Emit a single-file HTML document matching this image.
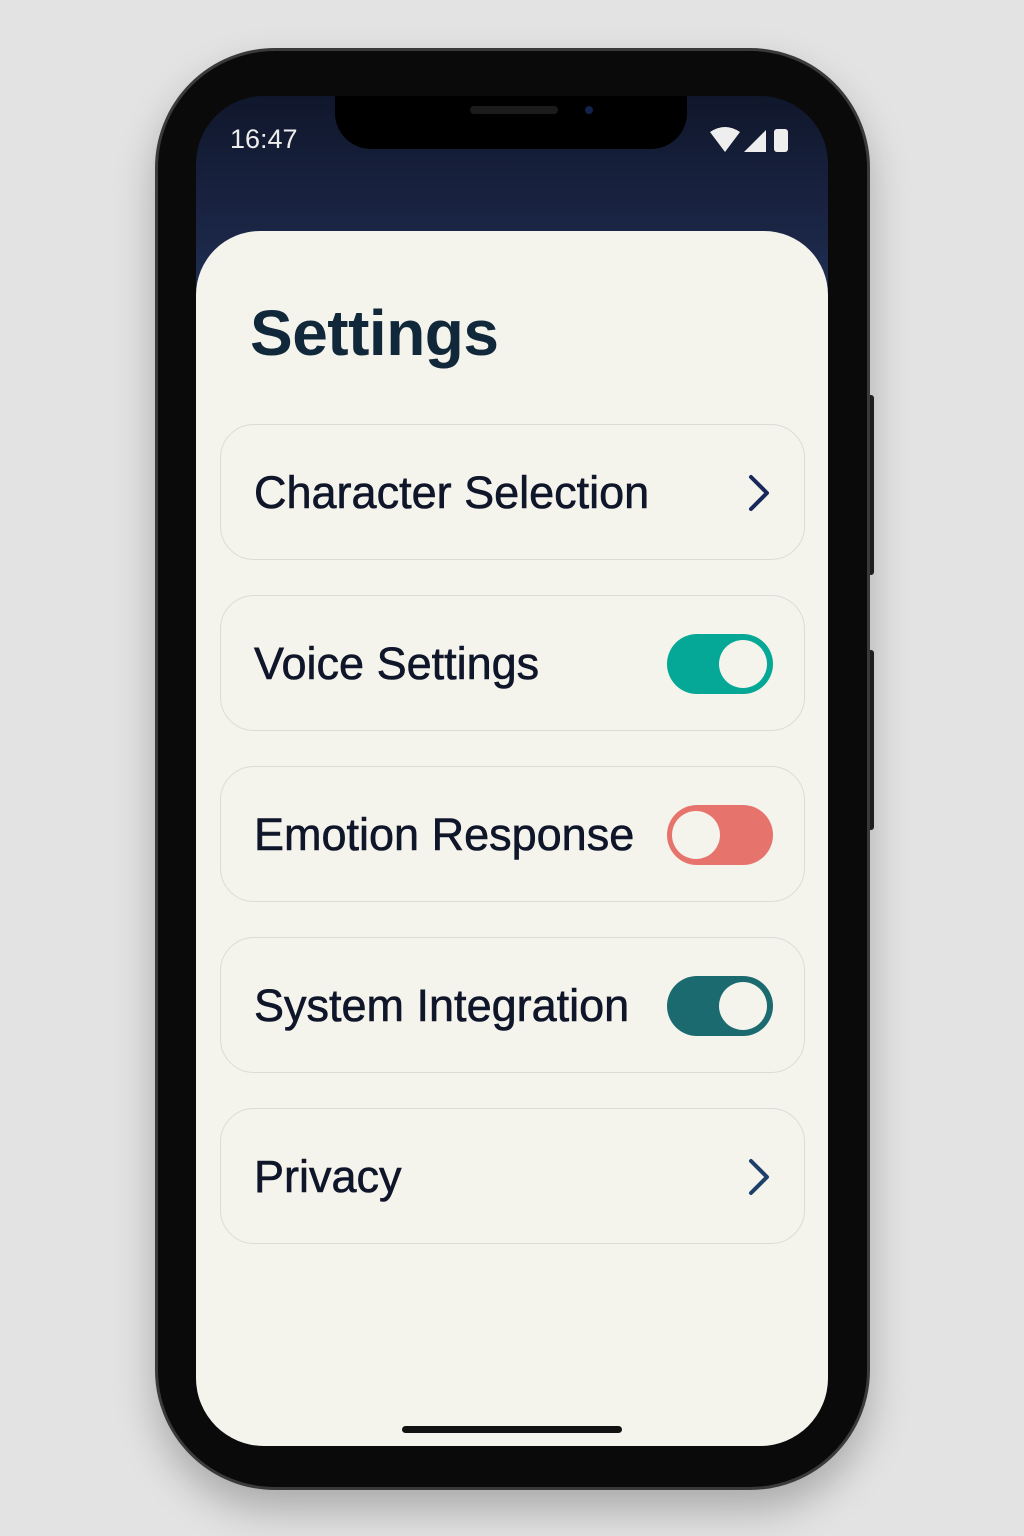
<!DOCTYPE html><html><head><style>
body{margin:0;width:1024px;height:1536px;background:#e3e3e3;position:relative;overflow:hidden;font-family:"Liberation Sans",sans-serif}
.btn{position:absolute;left:866px;width:8px;background:#222;border-radius:3px}
.phone{position:absolute;left:155px;top:48px;width:715px;height:1442px;border-radius:120px;background:#0a0a0a;border:3px solid #3a3a3a;box-sizing:border-box;box-shadow:0 20px 40px rgba(0,0,0,.25)}
.screen{position:absolute;left:196px;top:96px;width:632px;height:1350px;border-radius:68px;overflow:hidden;background:linear-gradient(#10172c,#1b2646 140px,#2a4068 300px)}
.notch{position:absolute;left:139px;top:0;width:352px;height:53px;background:#000;border-radius:0 0 36px 36px}
.sheet{position:absolute;left:0;top:135px;width:632px;height:1300px;background:#f4f3ec;border-radius:64px 64px 0 0}
.title{position:absolute;left:54px;top:65px;font-size:64px;font-weight:bold;color:#10283a;letter-spacing:-.5px}
.card{position:absolute;left:24px;width:585px;height:136px;border:1.5px solid #dcdbd4;border-radius:34px;box-sizing:border-box}
.card span{position:absolute;left:33px;top:42px;font-size:45px;color:#10162a;letter-spacing:0;-webkit-text-stroke:.6px #10162a}
.tg{position:absolute;left:446px;top:38px;width:106px;height:60px;border-radius:30px}
.kn{position:absolute;top:6px;width:48px;height:48px;border-radius:50%;background:#f4f3ec}
.chev{position:absolute;left:524px;top:48px}
</style></head><body>
<div class="btn" style="top:395px;height:180px"></div>
<div class="btn" style="top:650px;height:180px"></div>
<div class="phone"></div>
<div class="screen">
<div class="notch"><div style="position:absolute;left:135px;top:10px;width:88px;height:8px;border-radius:4px;background:#1b1b1b"></div><div style="position:absolute;left:250px;top:10px;width:8px;height:8px;border-radius:50%;background:#12224a"></div></div>
<div style="position:absolute;left:34px;top:28px;color:#eee;font-size:27px">16:47</div>
<svg style="position:absolute;left:512px;top:30px" width="95" height="28"><path d="M2 6 Q17 -4 32 6 L17 26Z" fill="#eee"/><path d="M36 26 L58 4 L58 26Z" fill="#eee"/><rect x="66" y="3" width="14" height="23" rx="3" fill="#eee"/></svg>
<div class="sheet">
<div class="title">Settings</div>
<div class="card" style="top:193px"><span>Character Selection</span><svg class="chev" width="30" height="40"><path d="M6 4 L22 20 L6 36" fill="none" stroke="#18285a" stroke-width="4" stroke-linecap="round" stroke-linejoin="round"/></svg></div>
<div class="card" style="top:364px"><span>Voice Settings</span><div class="tg" style="background:#05a896"><div class="kn" style="left:52px"></div></div></div>
<div class="card" style="top:535px"><span>Emotion Response</span><div class="tg" style="background:#e6746c"><div class="kn" style="left:5px"></div></div></div>
<div class="card" style="top:706px"><span>System Integration</span><div class="tg" style="background:#1b6a70"><div class="kn" style="left:52px"></div></div></div>
<div class="card" style="top:877px"><span>Privacy</span><svg class="chev" width="30" height="40"><path d="M6 4 L22 20 L6 36" fill="none" stroke="#1d3f6a" stroke-width="4" stroke-linecap="round" stroke-linejoin="round"/></svg></div>
<div style="position:absolute;left:206px;top:1195px;width:220px;height:7px;border-radius:4px;background:#111"></div>
</div></div>
</body></html>
